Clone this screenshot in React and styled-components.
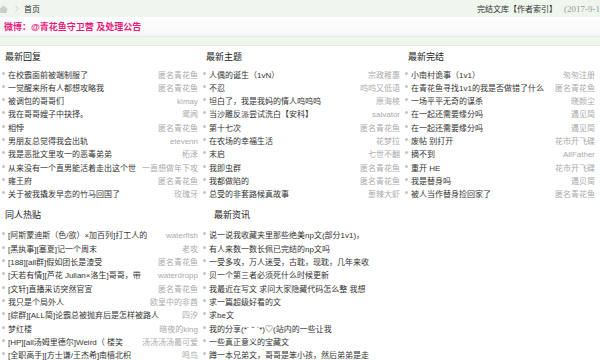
import React from "react";
import styled, { createGlobalStyle } from "styled-components";

const GlobalStyle = createGlobalStyle`
  html, body {
    margin: 0;
    padding: 0;
    background: #fff;
  }
  body {
    font-family: "Liberation Sans", "Noto Sans CJK SC", sans-serif;
    color: #333;
  }
`;

const replies = [
  ["在校霸面前被端制服了", "匿名青花鱼"],
  ["一觉醒来所有人都想攻略我", "匿名青花鱼"],
  ["被调包的哥哥们", "kimay"],
  ["我在哥哥嫂子中抉择。", "鸳闻"],
  ["相悖", "匿名青花鱼"],
  ["男朋友总觉得我会出轨", "elevenn"],
  ["我是恶批文里攻一的恶毒弟弟", "柘泽"],
  ["从来没有一个直男能活着走出这个世", "一直想做年下攻"],
  ["雍王府", "匿名青花鱼"],
  ["关于被我撬发早恋的竹马回国了", "玫瑰牙"],
];

const fanPosts = [
  ["[阿斯蒙迪斯（色/欲）×加百列]打工人的", "waterfish"],
  ["[黑执事][塞夏]记一个周末", "老攻"],
  ["[188][all群]假如团长是渣受", "匿名青花鱼"],
  ["[天若有情][芦花 Julian×洛生]哥哥，带", "waterdropp"],
  ["[文轩]直播采访突然官宣", "匿名青花鱼"],
  ["我只是个局外人", "欧皇中的非酋"],
  ["[综群][ALL简]论霸总被抛弃后是怎样被路人", "四汐"],
  ["梦红楼", "暗夜的king"],
  ["[HP][all汤姆里德尔]Weird（ 楼笑", "汤汤汤汤最可爱"],
  ["[全职高手][方士谦/王杰希]南樯北枳", "鸣鸟"],
];

const topics = [
  ["人偶的诞生（1vN）", "宗政稚惠"],
  ["不忍", "呜呜又低语"],
  ["坦白了，我是我妈的情人呜呜呜", "原海棱"],
  ["当沙雕反派尝试洗白【安科】", "salvator"],
  ["第十七次", "匿名青花鱼"],
  ["在农场的幸福生活", "花梦拉"],
  ["末启", "七世不翻"],
  ["我即虫群", "匿名青花鱼"],
  ["我都做陷的", "匿名青花鱼"],
  ["总受的非套路候真故事", "葱辣大虾"],
];

const news = [
  "说一说我收藏夹里那些绝美np文(部分1v1)，",
  "有人来数一数长佩已完结的np文吗",
  "一受多攻，万人迷受，古耽，现耽，几年来收",
  "贝一个第三者必须死什么时候更新",
  "我最近在写文 求问大家隐藏代码怎么整 我想",
  "求一篇超级好看的文",
  "求be文",
  "我的分享(*´ ˘ `*)♡(站内的一些让我",
  "一些真正意义的宝藏文",
  "蹲一本兄弟文，哥哥是笨小孩，然后弟弟是走",
];

const finished = [
  ["小南村诡事（1v1）", "匆匆注册"],
  ["在青花鱼寻找1v1的我是否做错了什么", "匿名青花鱼"],
  ["一场平平无奇的谋杀", "晓颜尘"],
  ["在一起还需要缘分吗", "遇见简"],
  ["在一起还需要缘分吗", "遇见简"],
  ["废帖 别打开", "花市开飞碟"],
  ["摘不到", "AllFather"],
  ["重开 HE", "花市开飞碟"],
  ["我是替身吗", "遇贝简"],
  ["被人当作替身捡回家了", "匿名青花鱼"],
];

const HomeIcon = () => (
  <svg width="9" height="8" viewBox="0 0 9 8">
    <path d="M4.5 0.5 L9 4.2 L7.8 4.2 L7.8 8 L1.2 8 L1.2 4.2 L0 4.2 Z" fill="#c9cfc9" />
  </svg>
);

const Chevron = () => (
  <svg width="4" height="7" viewBox="0 0 4 7">
    <path d="M0.5 0.5 L3.2 3.5 L0.5 6.5" fill="none" stroke="#c4c4c4" strokeWidth="0.8" />
  </svg>
);

const Section = ({ title, items, indent, second }) => (
  <div>
    <Heading $indent={indent} $second={second}>
      {title}
    </Heading>
    <List>
      {items.map((item, i) => {
        const [text, author] = Array.isArray(item) ? item : [item];
        return (
          <Item key={i}>
            <Title>{text}</Title>
            {author && <Author>{author}</Author>}
          </Item>
        );
      })}
    </List>
  </div>
);

export default function App() {
  return (
    <Page>
      <GlobalStyle />
      <TopBar>
        <Crumbs>
          <HomeWrap>
            <HomeIcon />
          </HomeWrap>
          <Chevron />
          <span>首页</span>
        </Crumbs>
        <TopLinks>
          <span>完结文库【作者索引】</span>
          <DateText>(2017-9-1</DateText>
        </TopLinks>
      </TopBar>
      <Notice>微博：@青花鱼守卫营 及处理公告</Notice>
      <Band />
      <Columns>
        <Column>
          <Section title="最新回复" items={replies} indent={5} />
          <Section title="同人热贴" items={fanPosts} indent={5} second />
        </Column>
        <Column>
          <Section title="最新主题" items={topics} indent={5} />
          <Section title="最新资讯" items={news} indent={13} second />
        </Column>
        <Column>
          <Section title="最新完结" items={finished} indent={5} />
        </Column>
      </Columns>
    </Page>
  );
}

const Page = styled.div`
  width: 600px;
  height: 360px;
  overflow: hidden;
  background: #fff;
`;

const TopBar = styled.div`
  height: 17px;
  background: #eef6ed;
  display: flex;
  align-items: center;
  justify-content: space-between;
  font-size: 8px;
  color: #333;
  white-space: nowrap;
  overflow: hidden;
`;

const Crumbs = styled.div`
  display: flex;
  align-items: center;
  gap: 5px;
`;

const HomeWrap = styled.span`
  display: flex;
  margin-left: -1px;
  margin-right: 2px;
`;

const TopLinks = styled.div`
  display: flex;
  align-items: center;
  gap: 7px;
`;

const DateText = styled.span`
  font-family: "Liberation Serif", serif;
  font-size: 9px;
  color: #999;
`;

const Notice = styled.div`
  height: 20px;
  line-height: 20px;
  padding-left: 4px;
  background: linear-gradient(#ffffff, #f6f7f6);
  border-bottom: 1px solid #e8ece8;
  color: #ea1a7c;
  font-size: 9px;
  font-weight: bold;
  box-sizing: border-box;
`;

const Band = styled.div`
  height: 8px;
  background: #eef6ed;
  border-bottom: 1px solid #e2ebe2;
`;

const Columns = styled.div`
  display: grid;
  grid-template-columns: 198px 199px 192px;
  column-gap: 3px;
  align-items: start;
`;

const Column = styled.div`
  display: flex;
  flex-direction: column;
`;

const Heading = styled.div`
  font-size: 9px;
  line-height: 18px;
  color: #222;
  padding-left: ${(p) => p.$indent}px;
  margin-top: ${(p) => (p.$second ? "4px" : "2px")};
  margin-bottom: ${(p) => (p.$second ? "5.5px" : "2.5px")};
`;

const List = styled.ul`
  list-style: none;
  margin: 0;
  padding: 0;
`;

const Item = styled.li`
  position: relative;
  display: flex;
  height: 13.33px;
  line-height: 13.33px;
  font-size: 8px;
  padding-left: 8px;
  white-space: nowrap;

  &::before {
    content: "";
    position: absolute;
    left: 2px;
    top: 3px;
    width: 3px;
    height: 3px;
    border-radius: 50%;
    background: #c4c4c4;
  }
`;

const Title = styled.span`
  flex: 1;
  min-width: 0;
  overflow: hidden;
  color: #333;
`;

const Author = styled.span`
  flex-shrink: 0;
  margin-left: 6px;
  color: #aaa;
`;
